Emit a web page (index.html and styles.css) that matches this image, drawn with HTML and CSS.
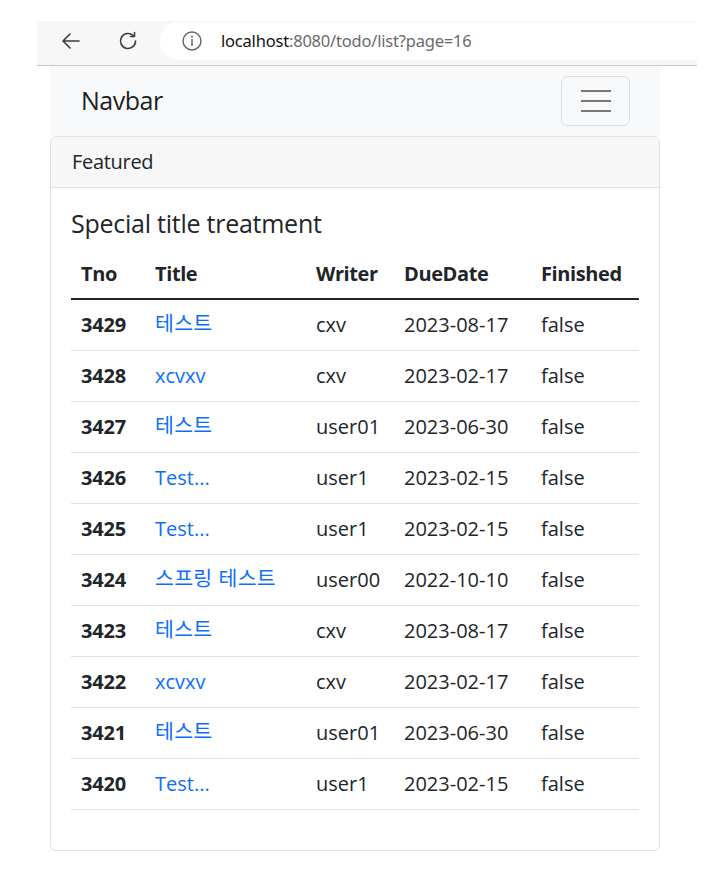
FILE: index.html
```html
<!DOCTYPE html>
<html lang="ko">
<head>
<meta charset="utf-8">
<title>Todo List</title>
<link rel="stylesheet" href="styles.css">
</head>
<body>
<div class="chrome">
  <div class="chrome-btn">
    <svg width="24" height="24" viewBox="0 0 24 24" fill="none" stroke="#3c3c3c" stroke-width="1.6" stroke-linecap="round" stroke-linejoin="round"><path d="M20 12H4M11 5l-7 7 7 7"/></svg>
  </div>
  <div class="chrome-btn">
    <svg width="24" height="24" viewBox="0 0 24 24" fill="none" stroke="#3c3c3c" stroke-width="1.6" stroke-linecap="round" stroke-linejoin="round"><path d="M19.5 12a7.5 7.5 0 1 1-2.2-5.3"/><path d="M18.5 3.5v4h-4"/></svg>
  </div>
  <div class="omnibox">
    <svg class="info" width="22" height="22" viewBox="0 0 22 22" fill="none" stroke="#5f6368" stroke-width="1.4"><circle cx="11" cy="11" r="9"/><path d="M11 9.5v6" stroke-linecap="round"/><circle cx="11" cy="6.6" r="0.4" fill="#5f6368"/></svg>
    <span class="url"><span class="host">localhost</span>:8080/todo/list?page=16</span>
  </div>
</div>

<div class="page">
  <nav class="navbar">
    <span class="brand">Navbar</span>
    <button class="toggler" type="button" aria-label="Toggle navigation">
      <span class="bar"></span><span class="bar"></span><span class="bar"></span>
    </button>
  </nav>

  <div class="card">
    <div class="card-header">Featured</div>
    <div class="card-body">
      <h5 class="card-title">Special title treatment</h5>
      <table class="table">
        <colgroup>
          <col class="c-tno"><col class="c-title"><col class="c-writer"><col class="c-date"><col class="c-fin">
        </colgroup>
        <thead>
          <tr><th>Tno</th><th>Title</th><th>Writer</th><th>DueDate</th><th>Finished</th></tr>
        </thead>
        <tbody>
          <tr><th>3429</th><td><a class="kr" href="#">테스트</a></td><td>cxv</td><td>2023-08-17</td><td>false</td></tr>
          <tr><th>3428</th><td><a href="#">xcvxv</a></td><td>cxv</td><td>2023-02-17</td><td>false</td></tr>
          <tr><th>3427</th><td><a class="kr" href="#">테스트</a></td><td>user01</td><td>2023-06-30</td><td>false</td></tr>
          <tr><th>3426</th><td><a href="#">Test...</a></td><td>user1</td><td>2023-02-15</td><td>false</td></tr>
          <tr><th>3425</th><td><a href="#">Test...</a></td><td>user1</td><td>2023-02-15</td><td>false</td></tr>
          <tr><th>3424</th><td><a class="kr" href="#">스프링 테스트</a></td><td>user00</td><td>2022-10-10</td><td>false</td></tr>
          <tr><th>3423</th><td><a class="kr" href="#">테스트</a></td><td>cxv</td><td>2023-08-17</td><td>false</td></tr>
          <tr><th>3422</th><td><a href="#">xcvxv</a></td><td>cxv</td><td>2023-02-17</td><td>false</td></tr>
          <tr><th>3421</th><td><a class="kr" href="#">테스트</a></td><td>user01</td><td>2023-06-30</td><td>false</td></tr>
          <tr><th>3420</th><td><a href="#">Test...</a></td><td>user1</td><td>2023-02-15</td><td>false</td></tr>
        </tbody>
      </table>
    </div>
  </div>
</div>
</body>
</html>
```

FILE: styles.css
```css
* { box-sizing: border-box; }

html, body {
  margin: 0;
  padding: 0;
  background: #fff;
}

body {
  font-family: "Open Sans", "Noto Sans CJK KR", sans-serif;
  font-size: 20px;
  line-height: 1.5;
  color: #212529;
  padding-top: 21px;
}

/* Browser chrome */
.chrome {
  margin-left: 37px;
  width: 660px;
  height: 45px;
  background: #f7f7f7;
  border-bottom: 1px solid #c9c9c9;
  display: flex;
  align-items: flex-start;
  padding-top: 1px;
}

.chrome-btn {
  width: 44px;
  height: 38px;
  display: flex;
  align-items: center;
  justify-content: center;
  margin-left: 12px;
}

.chrome-btn + .chrome-btn {
  margin-left: 13px;
}

.omnibox {
  margin-left: 10px;
  flex: 1;
  height: 38px;
  background: #fff;
  border-radius: 19px 0 0 19px;
  display: flex;
  align-items: center;
  padding-left: 21px;
}

.info {
  display: block;
}

.url {
  margin-left: 18px;
  font-family: "Noto Sans", "Open Sans", sans-serif;
  font-size: 16.5px;
  color: #6a6a6a;
  letter-spacing: -0.2px;
}

.url .host {
  color: #111;
}

/* Page */
.page {
  margin-left: 50px;
  width: 610px;
}

.navbar {
  height: 70px;
  background: #f8f9fa;
  display: flex;
  align-items: center;
  justify-content: space-between;
  padding: 0 30px 0 31px;
}

.brand {
  font-size: 25px;
  line-height: 1.5;
  color: rgba(0, 0, 0, 0.9);
  letter-spacing: -0.5px;
}

.toggler {
  width: 69px;
  height: 50px;
  background: transparent;
  border: 1px solid rgba(0, 0, 0, 0.1);
  border-radius: 6px;
  display: flex;
  flex-direction: column;
  align-items: center;
  justify-content: center;
  gap: 7.5px;
  padding: 0;
}

.toggler .bar {
  display: block;
  width: 30px;
  height: 2.5px;
  background: #7a7a7a;
}

.card {
  border: 1px solid #dee2e6;
  border-radius: 6px;
  background: #fff;
  overflow: hidden;
}

.card-header {
  background: #f7f7f7;
  border-bottom: 1px solid #dee2e6;
  padding: 10px 20px 10px 21px;
  line-height: 30px;
  letter-spacing: -0.3px;
}

.card-body {
  padding: 20px;
}

.card-title {
  margin: 0 0 10px;
  font-size: 25px;
  font-weight: 400;
  line-height: 1.2;
  letter-spacing: -0.25px;
}

.table {
  width: 100%;
  border-collapse: collapse;
  margin-bottom: 20px;
  table-layout: fixed;
}

.c-tno { width: 74px; }
.c-title { width: 161px; }
.c-writer { width: 88px; }
.c-date { width: 137px; }
.c-fin { width: 108px; }

.table th,
.table td {
  padding: 10px 10px;
  height: 51px;
  line-height: 30px;
  text-align: left;
  vertical-align: middle;
  border-bottom: 1px solid #dee2e6;
  white-space: nowrap;
}

.table th {
  font-weight: 700;
}

.table thead th {
  height: 50px;
  border-bottom: 2px solid #212529;
  padding-top: 11px;
  padding-bottom: 9px;
  letter-spacing: -0.4px;
}

.table tbody th {
  letter-spacing: -0.2px;
}

.table a {
  color: #0d6efd;
  text-decoration: none;
}

.table a.kr {
  display: inline-block;
  height: 30px;
  line-height: 30px;
  vertical-align: top;
  font-family: "Noto Sans CJK KR", sans-serif;
  font-size: 20.5px;
  letter-spacing: 0.3px;
  position: relative;
  top: -3px;
}
```
